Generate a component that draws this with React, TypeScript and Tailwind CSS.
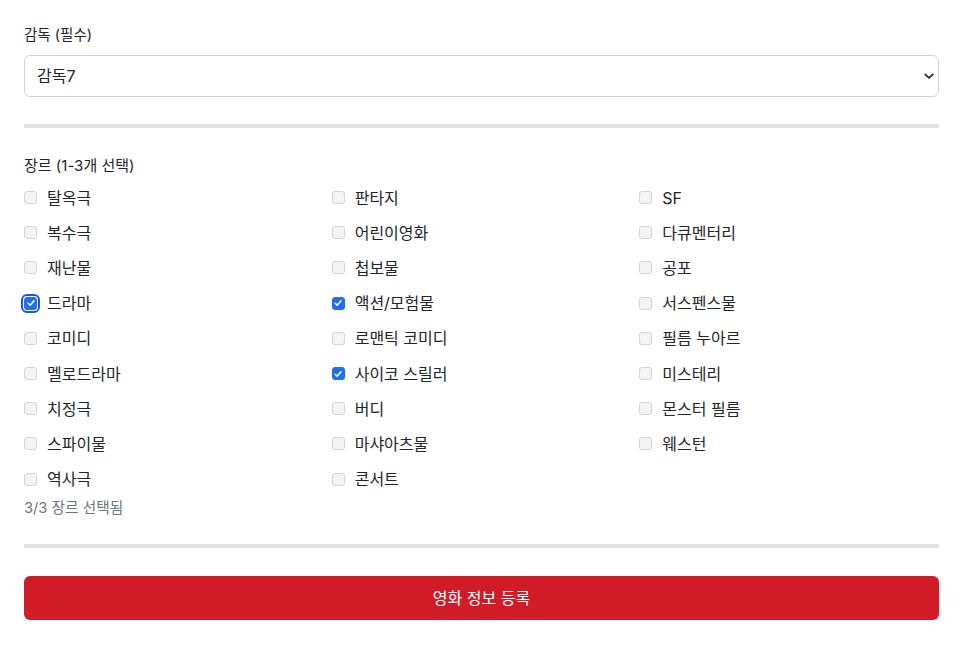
import React, { useState } from "react";

const GENRES = [
  "탈옥극", "판타지", "SF",
  "복수극", "어린이영화", "다큐멘터리",
  "재난물", "첩보물", "공포",
  "드라마", "액션/모험물", "서스펜스물",
  "코미디", "로맨틱 코미디", "필름 누아르",
  "멜로드라마", "사이코 스릴러", "미스테리",
  "치정극", "버디", "몬스터 필름",
  "스파이물", "마샤아츠물", "웨스턴",
  "역사극", "콘서트",
];

const font = "font-['Inter','Noto_Sans_CJK_KR',sans-serif]";

function Box({ checked, focused }: { checked: boolean; focused?: boolean }) {
  return (
    <span
      className={
        "relative flex h-[13px] w-[13px] shrink-0 items-center justify-center rounded-[3px] " +
        (checked
          ? "bg-[#1d6ef0] border border-[#1d6ef0]"
          : "bg-[#f4f4f4] border border-[#d4d4d4]") +
        (focused ? " outline-2 outline-offset-1 outline-[#1a56db]" : "")
      }
    >
      {checked && (
        <svg viewBox="0 0 12 12" className="h-[10px] w-[10px]">
          <path d="M2.5 6.3 L5 8.6 L9.6 3.4" fill="none" stroke="white" strokeWidth="1.9" strokeLinecap="round" strokeLinejoin="round" />
        </svg>
      )}
    </span>
  );
}

export default function App() {
  const [selected, setSelected] = useState<string[]>(["드라마", "액션/모험물", "사이코 스릴러"]);

  const toggle = (g: string) => {
    setSelected((s) =>
      s.includes(g) ? s.filter((x) => x !== g) : s.length < 3 ? [...s, g] : s
    );
  };

  return (
    <div className={`${font} bg-white min-h-screen pl-6 pr-[34px] pt-[25px] text-[#212529]`}>
      {/* 감독 */}
      <label className="block text-[14.5px] leading-5 mb-[10px]">감독 (필수)</label>
      <div className="relative">
        <select
          defaultValue="감독7"
          className="w-full h-[42px] appearance-none rounded-md border border-[#ced4da] bg-white pl-3 pr-10 text-base text-[#212529] outline-none"
        >
          {Array.from({ length: 10 }, (_, i) => (
            <option key={i}>감독{i + 1}</option>
          ))}
        </select>
        <svg
          viewBox="0 0 16 16"
          className="pointer-events-none absolute right-[4px] top-1/2 h-[12px] w-[12px] -translate-y-1/2"
        >
          <path d="M3 6 L8 10.5 L13 6" fill="none" stroke="#343a40" strokeWidth="2.6" strokeLinecap="round" strokeLinejoin="round" />
        </svg>
      </div>

      <div className="mt-[27px] h-[4px] bg-[#e2e3e7]" />

      {/* 장르 */}
      <div className="mt-[28px] text-[15px] leading-5">장르 (1-3개 선택)</div>
      <div className="mt-[4px] grid grid-cols-3 gap-x-2">
        {GENRES.map((g) => (
          <label
            key={g}
            className="flex h-[35.2px] cursor-pointer items-center gap-[10px] text-base"
            onClick={(e) => {
              e.preventDefault();
              toggle(g);
            }}
          >
            <Box checked={selected.includes(g)} focused={g === "드라마"} />
            <span>{g}</span>
          </label>
        ))}
      </div>
      <div className="mt-[1px] text-[14.7px] leading-5 text-[#6c757d]">{selected.length}/3 장르 선택됨</div>

      <div className="mt-[26px] h-[4px] bg-[#e2e3e7]" />

      <button className="mt-[28px] flex h-[44px] w-full items-center justify-center rounded-md bg-[#d11c28] text-base text-white">
        영화 정보 등록
      </button>
    </div>
  );
}
